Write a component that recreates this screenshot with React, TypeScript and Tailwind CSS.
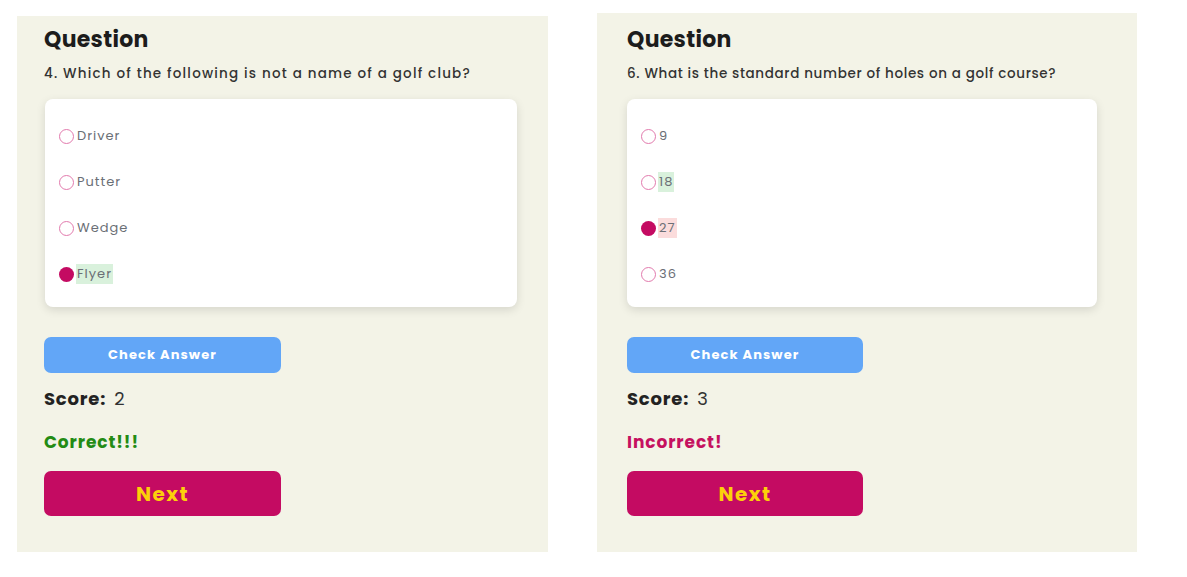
const font = { fontFamily: 'Poppins, "Open Sans", "Liberation Sans", sans-serif' }

type Opt = { label: string; selected?: boolean; mark?: 'right' | 'wrong' }

function QuizPanel({
  question,
  options,
  score,
  result,
  correct,
  panelClass,
  questionClass,
  cardClass,
  btnClass,
}: {
  question: string
  options: Opt[]
  score: number
  result: string
  correct: boolean
  panelClass: string
  questionClass: string
  cardClass: string
  btnClass: string
}) {
  return (
    <div className={`bg-[#f3f3e7] ${panelClass}`}>
      <h2 className="text-[22px] font-bold text-[#1c1c1c] leading-[28px] tracking-[0.3px]">Question</h2>
      <p className={`mt-[11px] text-[13.5px] font-medium text-[#333] leading-[18px] ${questionClass}`}>{question}</p>
      <div className={`mt-[16px] bg-white rounded-[8px] shadow-[0_3px_10px_rgba(0,0,0,0.12)] pt-[14px] pb-[10px] ${cardClass}`}>
        {options.map((o) => (
          <div key={o.label} className="flex items-center h-[46px] pl-[14px]">
            <span
              className={`w-[15px] h-[15px] rounded-full ${
                o.selected ? 'bg-[#c40b62]' : 'border-[1.5px] border-[#e27aad] bg-white'
              }`}
            />
            <span
              className={`ml-[2px] text-[13px] text-[#6b6f76] leading-[20px] px-[1px] tracking-[1px] ${
                o.mark === 'right' ? 'bg-[#d9f1dc]' : o.mark === 'wrong' ? 'bg-[#fbdcdc]' : ''
              }`}
            >
              {o.label}
            </span>
          </div>
        ))}
      </div>
      <button
        className={`mt-[30px] h-[36px] rounded-[7px] bg-[#62a6f7] text-white text-[13px] font-bold tracking-[1.1px] ${btnClass}`}
      >
        Check Answer
      </button>
      <div className="mt-[13px] flex items-baseline gap-[8px] text-[18px] leading-[26px] tracking-[0.8px]">
        <span className="font-bold text-[#222]">Score:</span>
        <span className="text-[#333]">{score}</span>
      </div>
      <div
        className={`mt-[17px] text-[17px] font-bold leading-[26px] tracking-[0.9px] ${
          correct ? 'text-[#238b14]' : 'text-[#c5105f]'
        }`}
      >
        {result}
      </div>
      <button
        className={`mt-[16px] h-[45px] rounded-[7px] bg-[#c40b62] text-[#fcd00a] text-[20px] font-bold block tracking-[1.5px] ${btnClass}`}
      >
        Next
      </button>
    </div>
  )
}

export default function App() {
  return (
    <div className="w-[1187px] h-[577px] bg-white flex items-start" style={font}>
      <div className="ml-[17px] mt-[16px]">
        <QuizPanel
          question="4. Which of the following is not a name of a golf club?"
          options={[
            { label: 'Driver' },
            { label: 'Putter' },
            { label: 'Wedge' },
            { label: 'Flyer', selected: true, mark: 'right' },
          ]}
          score={2}
          result="Correct!!!"
          correct
          panelClass="w-[531px] h-[536px] pl-[27px] pt-[10px]"
          questionClass="tracking-[1.2px]"
          cardClass="w-[472px] ml-[1px]"
          btnClass="w-[237px]"
        />
      </div>
      <div className="ml-[49px] mt-[13px]">
        <QuizPanel
          question="6. What is the standard number of holes on a golf course?"
          options={[
            { label: '9' },
            { label: '18', mark: 'right' },
            { label: '27', selected: true, mark: 'wrong' },
            { label: '36' },
          ]}
          score={3}
          result="Incorrect!"
          correct={false}
          panelClass="w-[540px] h-[539px] pl-[30px] pt-[13px]"
          questionClass="tracking-[0.65px]"
          cardClass="w-[470px]"
          btnClass="w-[236px]"
        />
      </div>
    </div>
  )
}
